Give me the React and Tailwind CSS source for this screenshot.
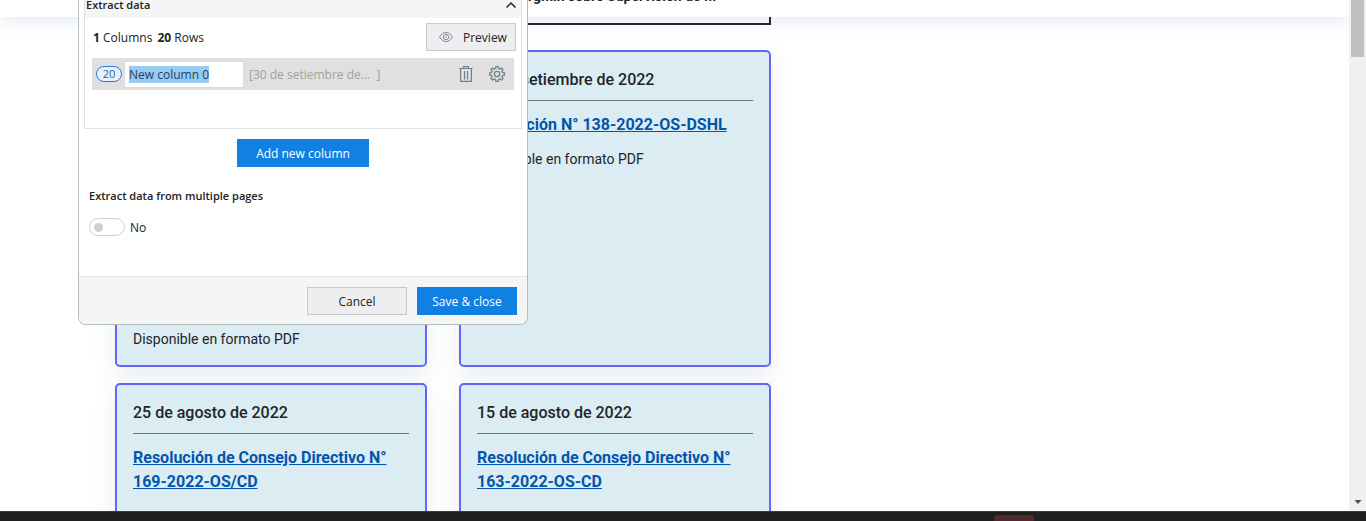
import { useEffect, useRef } from "react";

function EyeIcon() {
  return (
    <svg width="14" height="12" viewBox="0 0 14 12" fill="none" stroke="#7d8b93" strokeWidth="1" aria-hidden="true">
      <path d="M.6 6C2.300 2.800 4.400 1.500 7 1.500S11.700 2.800 13.400 6C11.700 9.200 9.600 10.500 7 10.500S2.300 9.200.6 6Z" />
      <circle cx="7" cy="6" r="2.700" />
      <circle cx="7" cy="6" r=".8" strokeWidth=".5" />
    </svg>
  );
}

function TrashIcon() {
  return (
    <svg width="14" height="16" viewBox="0 0 14 16" fill="none" stroke="#71818c" strokeWidth="1.200" aria-hidden="true">
      <path d="M.3 2.500h13.400M4.600 2.300V.6h4.800v1.700M1.600 2.700v12.700h10.800V2.700" />
      <path d="M5.500 5v8.500M8.500 5v8.500" />
    </svg>
  );
}

const TEETH = [0, 45, 90, 135, 180, 225, 270, 315];

function GearIcon() {
  const points = TEETH.flatMap((deg) =>
    [[-14, 5.7], [-9, 7.5], [9, 7.5], [14, 5.7]].map(([offset, radius]) => {
      const a = ((deg + offset) * Math.PI) / 180;
      return `${(8 + radius * Math.cos(a)).toFixed(2)},${(8 + radius * Math.sin(a)).toFixed(2)}`;
    })
  ).join(" ");
  return (
    <svg width="16" height="16" viewBox="0 0 16 16" fill="none" stroke="#71818c" strokeWidth="1.300" strokeLinejoin="round" aria-hidden="true">
      <polygon points={points} />
      <circle cx="8" cy="8" r="2.700" />
    </svg>
  );
}

function Card({ date, title, note, end }) {
  return (
    <article
      className={`flex flex-col rounded-[5px] border-2 border-[#6464fa] bg-[#dcecf3] p-4 shadow-[0_8px_24px_rgba(30,70,130,0.1)] ${end ? "justify-end" : ""}`}
    >
      {date && <h3 className="mb-3 border-b border-[#70757c] pb-2 text-base leading-6 font-medium">{date}</h3>}
      {title && (
        <a href="#resolucion" className="mb-3 text-base leading-6 font-bold text-[#0056ac] underline">
          {title}
        </a>
      )}
      {note && <p className="text-sm leading-5">{note}</p>}
    </article>
  );
}

function ExtractDialog() {
  const nameRef = useRef(null);
  useEffect(() => {
    nameRef.current.focus();
    nameRef.current.select();
  }, []);
  return (
    <section
      role="dialog"
      aria-label="Extract data"
      className="absolute top-0 left-[78px] w-[450px] overflow-hidden rounded-b-lg border border-t-0 border-[#b4bcc1] bg-white font-['Open_Sans',sans-serif] text-xs text-[#222]"
    >
      <div className="mx-[5px] h-[129px] border border-t-0 border-[#dfe1e2]">
        <div className="flex h-[18px] justify-between bg-[#f4f6f6] pr-1 pl-px">
          <h2 className="text-[11px] leading-[10px] font-semibold">Extract data</h2>
          <button type="button" aria-label="Collapse" className="h-[10px]">
            <svg width="12" height="8" viewBox="0 0 12 8" fill="none" stroke="#222" strokeWidth="1.500" aria-hidden="true">
              <path d="M1.500 6.500 6 2l4.500 4.500" />
            </svg>
          </button>
        </div>
        <div className="flex items-center justify-between pt-[5px] pr-[5px] pl-2">
          <p className="pt-0.5">
            <b>1</b> Columns <b className="ml-0.5">20</b> Rows
          </p>
          <button type="button" className="flex h-7 w-[90px] items-center gap-[10px] border border-[#c8c9cf] bg-[#eeeef0] pl-3">
            <EyeIcon />
            <span className="pt-0.5">Preview</span>
          </button>
        </div>
        <div className="mt-[7px] mr-[7px] ml-[7px] flex h-8 items-center bg-[#e0e0e0] pl-1">
          <span className="flex h-4 w-[26px] items-center justify-center rounded-full border border-[#2b7cd3] bg-[#e8f1fa] text-[11px] text-[#1f5e9e]">
            20
          </span>
          <input
            ref={nameRef}
            aria-label="Column name"
            defaultValue="New column 0"
            className="ml-0.5 h-[27px] w-[120px] border border-[#d8dbde] bg-white px-1 text-[#222] outline-none selection:bg-[#98caf2] selection:text-[#1b4368]"
          />
          <span className="ml-[5px] flex-1 pt-0.5 whitespace-pre text-[#a2a2a2]">[30 de setiembre de...  ]</span>
          <button type="button" aria-label="Delete column" className="mr-4">
            <TrashIcon />
          </button>
          <button type="button" aria-label="Column settings" className="mr-[9px]">
            <GearIcon />
          </button>
        </div>
      </div>
      <div className="flex justify-center pt-[10px]">
        <button type="button" className="h-7 w-[132px] bg-[#1080e2] pt-0.5 text-white">
          Add new column
        </button>
      </div>
      <h2 className="mt-5 ml-[10px] text-[11px] leading-[18px] font-semibold">Extract data from multiple pages</h2>
      <label className="mt-[13px] ml-[10px] flex items-center gap-[5px]">
        <input type="checkbox" role="switch" className="peer sr-only" />
        <span className="flex h-[18px] w-9 items-center rounded-full border border-[#d0d0d0] bg-white px-1 peer-checked:justify-end">
          <span className="size-[9px] rounded-full bg-[#d0d0d0]" />
        </span>
        <span className="pt-0.5 leading-4">No</span>
      </label>
      <footer className="mt-10 flex h-12 justify-end gap-[10px] border-t border-[#e0e4e4] bg-[#f4f6f6] pt-[10px] pr-[10px]">
        <button type="button" className="h-7 w-[100px] border border-[#c8c9cf] bg-[#eeeef0] pt-0.5">
          Cancel
        </button>
        <button type="button" className="h-7 w-[100px] bg-[#1080e2] pt-0.5 text-white">
          Save &amp; close
        </button>
      </footer>
    </section>
  );
}

export default function App() {
  return (
    <div className="relative flex h-screen flex-col overflow-hidden bg-white font-[Roboto,sans-serif] text-[#212529]">
      <div className="flex min-h-0 flex-1">
        <main className="min-w-0 flex-1 overflow-hidden">
          <header className="flex h-[17px] items-start pl-[492px] shadow-[0_4px_16px_rgba(30,70,130,0.12)]">
            <p className="-mt-3 text-sm leading-4 font-bold">Osinergmin sobre Supervisión de ...</p>
          </header>
          <div className="ml-[115px] max-w-[656px]">
            <div className="grid grid-cols-2 gap-8">
              <div className="col-start-2 h-2 border-2 border-t-0 border-[#26282c]" />
            </div>
            <div className="mt-[25px] grid grid-cols-2 gap-x-8 gap-y-4">
              <div className="grid min-h-[317px]">
                <Card end note="Disponible en formato PDF" />
              </div>
              <Card date="30 de setiembre de 2022" title="Resolución N° 138-2022-OS-DSHL" note="Disponible en formato PDF" />
              <Card date="25 de agosto de 2022" title="Resolución de Consejo Directivo N° 169-2022-OS/CD" />
              <Card date="15 de agosto de 2022" title="Resolución de Consejo Directivo N° 163-2022-OS-CD" />
            </div>
            <div className="h-8" />
          </div>
        </main>
        <div className="flex w-[17px] flex-col justify-between bg-[#f0f0f0]" aria-hidden="true">
          <div className="ml-0.5 h-[57px] w-[13px] bg-[#c1c1c1]" />
          <svg className="mb-1.5 ml-[5px]" width="8" height="6" viewBox="0 0 8 6">
            <path d="M.5 1h7L4 5Z" fill="#505050" />
          </svg>
        </div>
      </div>
      <div className="h-[10px] border-t border-[#3a3a3a] bg-[#202020]">
        <div className="mt-[3px] ml-[994px] h-1.5 w-10 rounded-t bg-[#54282c]" />
      </div>
      <ExtractDialog />
    </div>
  );
}
